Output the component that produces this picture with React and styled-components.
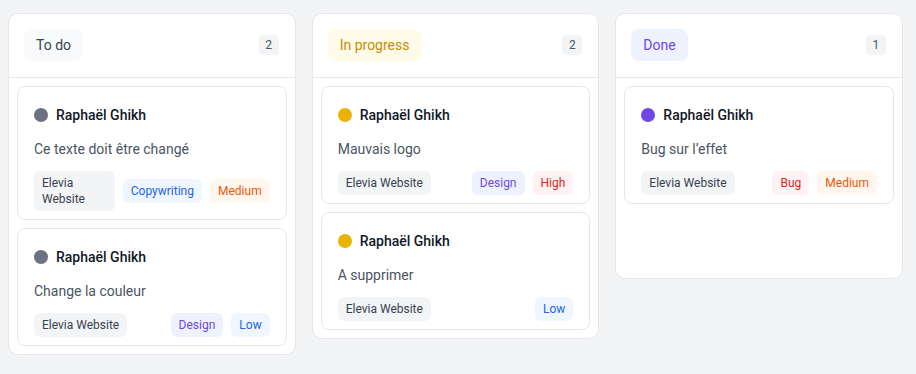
import React from "react"
import styled, { createGlobalStyle } from "styled-components"

const GlobalStyle = createGlobalStyle`
	* { box-sizing: border-box; }
	body {
		margin: 0;
		background: #f3f4f6;
		font-family: Roboto, "Liberation Sans", sans-serif;
		color: #111827;
	}
`

const statusTones = {
	todo: { bg: "#f9fafb", fg: "#374151", dot: "#6b7280" },
	progress: { bg: "#fefce8", fg: "#ca8a04", dot: "#eab308" },
	done: { bg: "#eef2ff", fg: "#6d48e5", dot: "#6d48e5" },
}

const tagTones = {
	project: { bg: "#f3f4f6", fg: "#374151" },
	design: { bg: "#eef2ff", fg: "#6d48e5" },
	copy: { bg: "#eff6ff", fg: "#2563eb" },
	bug: { bg: "#fef2f2", fg: "#dc2626" },
	High: { bg: "#fef2f2", fg: "#dc2626" },
	Medium: { bg: "#fff7ed", fg: "#ea580c" },
	Low: { bg: "#eff6ff", fg: "#2563eb" },
}

const columns = [
	{
		title: "To do",
		tone: "todo",
		cards: [
			{ title: "Ce texte doit être changé", type: ["copy", "Copywriting"], priority: "Medium" },
			{ title: "Change la couleur", type: ["design", "Design"], priority: "Low" },
		],
	},
	{
		title: "In progress",
		tone: "progress",
		cards: [
			{ title: "Mauvais logo", type: ["design", "Design"], priority: "High" },
			{ title: "A supprimer", priority: "Low" },
		],
	},
	{
		title: "Done",
		tone: "done",
		cards: [{ title: "Bug sur l’effet", type: ["bug", "Bug"], priority: "Medium" }],
	},
]

const Board = styled.div`
	display: grid;
	grid-template-columns: repeat(3, 1fr);
	gap: 16px;
	align-items: start;
	width: 895px;
	margin: 13px 0 0 8px;
`

const Column = styled.section`
	background: #fff;
	border: 1px solid #e5e7eb;
	border-radius: 10px;
`

const ColumnHeader = styled.header`
	display: flex;
	align-items: center;
	justify-content: space-between;
	padding: 15px 16px 16px 15px;
	border-bottom: 1px solid #e5e7eb;
`

const StatusPill = styled.span`
	display: inline-block;
	height: 32px;
	line-height: 32px;
	padding: 0 12px;
	border-radius: 8px;
	font-size: 14px;
	background: ${p => statusTones[p.$tone].bg};
	color: ${p => statusTones[p.$tone].fg};
`

const Count = styled.span`
	display: inline-flex;
	align-items: center;
	justify-content: center;
	width: 20px;
	height: 20px;
	border-radius: 4px;
	background: #f3f4f6;
	color: #4b5563;
	font-size: 12px;
`

const CardList = styled.div`
	display: flex;
	flex-direction: column;
	gap: 8px;
	padding: 8px;
	min-height: 200px;
`

const Card = styled.article`
	border: 1px solid #e5e7eb;
	border-radius: 8px;
	padding: 16px 16px 8px 16px;
	background: #fff;
`

const Assignee = styled.div`
	display: flex;
	align-items: center;
	gap: 8px;
	height: 24px;
	font-size: 14px;
	font-weight: 500;
	color: #111827;
`

const Dot = styled.span`
	width: 14px;
	height: 14px;
	border-radius: 50%;
	flex: 0 0 auto;
	background: ${p => p.$color};
`

const CardTitle = styled.p`
	margin: 12px 0 0;
	font-size: 14px;
	line-height: 20px;
	color: #4b5563;
`

const TagRow = styled.div`
	display: flex;
	align-items: center;
	justify-content: space-between;
	gap: 8px;
	margin-top: 12px;
`

const TagGroup = styled.div`
	display: flex;
	gap: 8px;
	flex: 0 0 auto;
`

const Tag = styled.span`
	display: inline-block;
	padding: 4px 8px;
	border-radius: 6px;
	font-size: 12px;
	line-height: 16px;
	background: ${p => tagTones[p.$tone].bg};
	color: ${p => tagTones[p.$tone].fg};
`

export default function App() {
	return (
		<>
			<GlobalStyle />
			<Board>
				{columns.map(col => (
					<Column key={col.title}>
						<ColumnHeader>
							<StatusPill $tone={col.tone}>{col.title}</StatusPill>
							<Count>{col.cards.length}</Count>
						</ColumnHeader>
						<CardList>
							{col.cards.map(card => (
								<Card key={card.title}>
									<Assignee>
										<Dot $color={statusTones[col.tone].dot} />
										Raphaël Ghikh
									</Assignee>
									<CardTitle>{card.title}</CardTitle>
									<TagRow>
										<Tag $tone="project">Elevia Website</Tag>
										<TagGroup>
											{card.type && <Tag $tone={card.type[0]}>{card.type[1]}</Tag>}
											<Tag $tone={card.priority}>{card.priority}</Tag>
										</TagGroup>
									</TagRow>
								</Card>
							))}
						</CardList>
					</Column>
				))}
			</Board>
		</>
	)
}
